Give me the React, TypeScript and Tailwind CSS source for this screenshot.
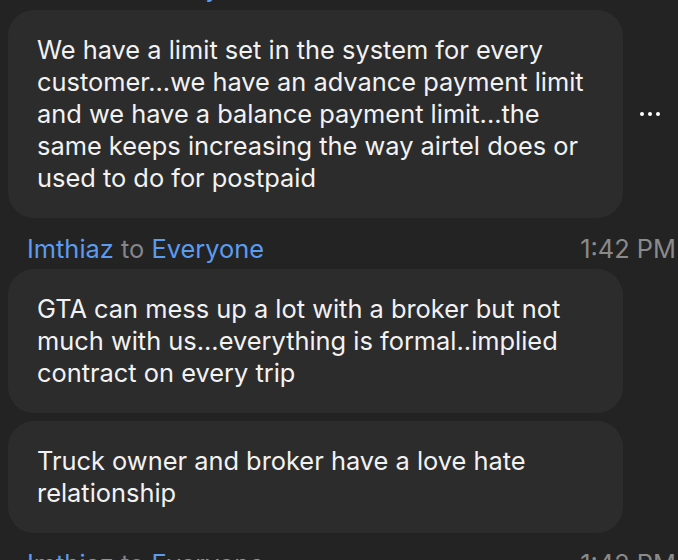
const messages = [
  {
    text: "We have a limit set in the system for every customer...we have an advance payment limit and we have a balance payment limit...the same keeps increasing the way airtel does or used to do for postpaid",
    menu: true,
  },
  {
    text: "GTA can mess up a lot with a broker but not much with us...everything is formal..implied contract on every trip",
  },
  {
    text: "Truck owner and broker have a love hate relationship",
  },
];

const Header = ({ className = "" }: { className?: string }) => (
  <div className={`flex items-center justify-between pl-[27px] pr-[2px] h-8 text-[25.4px] leading-8 ${className}`}>
    <div>
      <span className="text-[#5b9bf0]">Imthiaz</span>
      <span className="text-[#85858a]"> to </span>
      <span className="text-[#5b9bf0]">Everyone</span>
    </div>
    <span className="text-[#8a8a8a]">1:42 PM</span>
  </div>
);

const Bubble = ({ text, menu }: { text: string; menu?: boolean }) => (
  <div className="flex items-center">
    <div className="w-[615px] shrink-0 rounded-[26px] bg-[#2c2c2c] pl-[29px] pr-5 py-6 text-[25.4px] leading-8 text-[#f2f2f2]">
      {text}
    </div>
    {menu && (
      <div className="flex gap-1 pl-[17px]">
        <span className="h-1 w-1 rounded-full bg-white" />
        <span className="h-1 w-1 rounded-full bg-white" />
        <span className="h-1 w-1 rounded-full bg-white" />
      </div>
    )}
  </div>
);

export default function App() {
  return (
    <div
      className="h-[560px] w-[678px] overflow-hidden bg-[#232323]"
      style={{ fontFamily: "Inter, 'Noto Sans', sans-serif" }}
    >
      <div className="-mt-[28px] flex flex-col pl-2">
        <Header className="-ml-2 mb-[6px]" />
        {messages.map((m, i) => (
          <div key={i} className="flex flex-col">
            <Bubble text={m.text} menu={m.menu} />
            {i === 0 && <Header className="-ml-2 mt-[15px] mb-1" />}
            {i === 1 && <div className="h-2" />}
          </div>
        ))}
        <Header className="-ml-2 mt-[15px]" />
      </div>
    </div>
  );
}
